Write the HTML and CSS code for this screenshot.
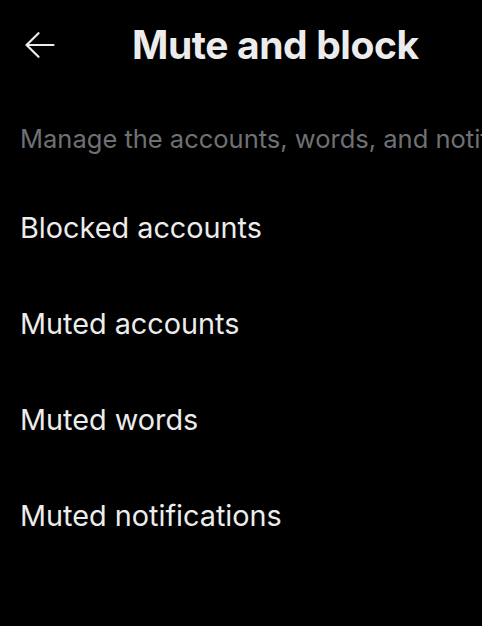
FILE: index.html
```html
<!DOCTYPE html>
<html>
<head>
<meta charset="utf-8">
<link rel="stylesheet" href="styles.css">
</head>
<body>
<div class="page">
  <header class="header">
    <button class="back" aria-label="Back">
      <svg width="30" height="26" viewBox="0 0 30 26" fill="none" stroke="#ececec" stroke-width="2.2" stroke-linecap="round" stroke-linejoin="round">
        <path d="M1.5 13 H28.5 M13.5 1.2 L1.5 13 L13.5 24.8"/>
      </svg>
    </button>
    <h1 class="title">Mute and block</h1>
  </header>
  <p class="subtitle">Manage the accounts, words, and notifications that you've muted or blocked.</p>
  <ul class="list">
    <li class="item">Blocked accounts</li>
    <li class="item">Muted accounts</li>
    <li class="item">Muted words</li>
    <li class="item">Muted notifications</li>
  </ul>
</div>
</body>
</html>
```
FILE: styles.css
```css
html, body {
  margin: 0;
  padding: 0;
  background: #000;
  overflow: hidden;
}
body {
  font-family: Inter, "Noto Sans", sans-serif;
  color: #e7e9ea;
  width: 482px;
  height: 626px;
}
.page {
  display: flex;
  flex-direction: column;
}
.header {
  display: flex;
  align-items: center;
  height: 90px;
  padding: 0 20px;
}
.back {
  background: none;
  border: 0;
  padding: 0;
  margin-left: 5px;
  width: 30px;
  height: 26px;
  display: flex;
}
.title {
  margin: 0 0 0 77px;
  font-size: 39px;
  line-height: 48px;
  font-weight: 700;
  color: #ececec;
  letter-spacing: -0.4px;
  white-space: nowrap;
}
.subtitle {
  margin: 34px 0 0 20px;
  font-size: 25.5px;
  line-height: 30px;
  color: #6e7075;
  white-space: nowrap;
  overflow: hidden;
}
.list {
  list-style: none;
  margin: 25px 0 0;
  padding: 0;
}
.item {
  padding: 0 20px;
  height: 96px;
  display: flex;
  align-items: center;
  font-size: 28.8px;
  color: #ececec;
  white-space: nowrap;
}
```
